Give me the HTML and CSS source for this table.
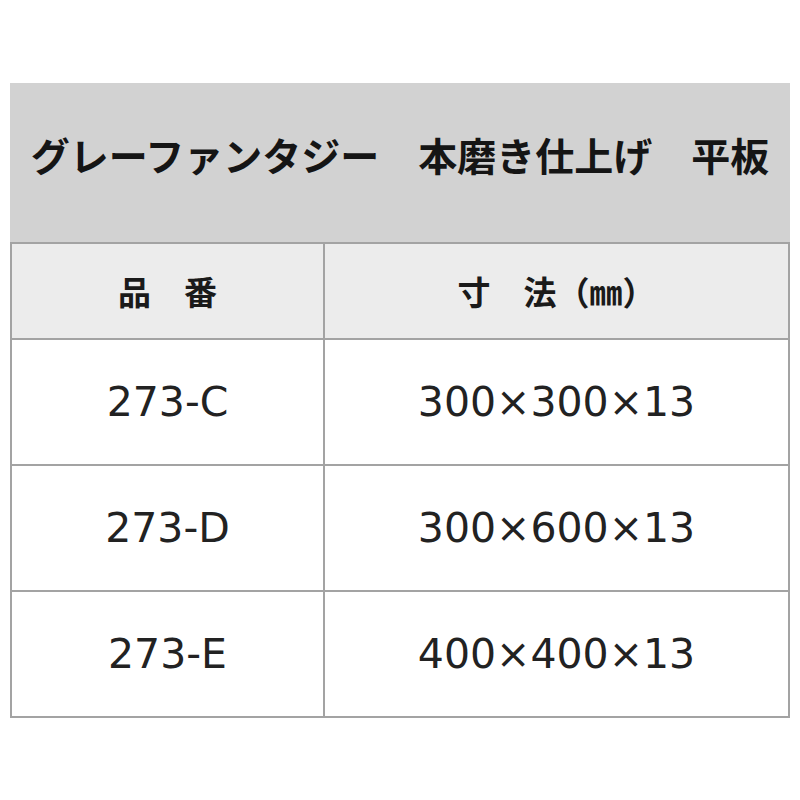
FILE: index.html
```html
<!DOCTYPE html>
<html lang="ja">
<head>
<meta charset="utf-8">
<link rel="stylesheet" href="styles.css">
</head>
<body>
<div class="sheet">
  <div class="title">グレーファンタジー　本磨き仕上げ　平板</div>
  <table class="spec">
    <colgroup><col class="c1"><col class="c2"></colgroup>
    <thead>
      <tr><th>品　番</th><th>寸　法<span class="unit">（㎜）</span></th></tr>
    </thead>
    <tbody>
      <tr><td>273-C</td><td>300×300×13</td></tr>
      <tr><td>273-D</td><td>300×600×13</td></tr>
      <tr><td>273-E</td><td>400×400×13</td></tr>
    </tbody>
  </table>
</div>
</body>
</html>
```

FILE: styles.css
```css
html, body {
  margin: 0;
  padding: 0;
  background: #ffffff;
}
.sheet {
  margin: 83px 10px 0 10px;
  width: 780px;
}
.title {
  height: 159px;
  background: #d2d2d2;
  display: flex;
  align-items: center;
  justify-content: center;
  padding-bottom: 18px;
  box-sizing: border-box;
  font-family: "Noto Sans CJK JP", sans-serif;
  font-weight: 700;
  font-size: 39px;
  color: #151515;
  white-space: nowrap;
}
.spec {
  width: 780px;
  border-collapse: collapse;
  table-layout: fixed;
}
.c1 { width: 313px; }
.spec th, .spec td {
  border: 2px solid #a3a3a3;
  text-align: center;
  padding: 0;
}
.spec th {
  height: 94px;
  background: #ececec;
  font-family: "Noto Sans CJK JP", sans-serif;
  font-weight: 700;
  font-size: 33px;
  color: #1a1a1a;
}
.unit {
  font-size: 33px;
}
.spec td {
  height: 124px;
  font-family: "DejaVu Sans", sans-serif;
  font-size: 41px;
  color: #222222;
}
```
